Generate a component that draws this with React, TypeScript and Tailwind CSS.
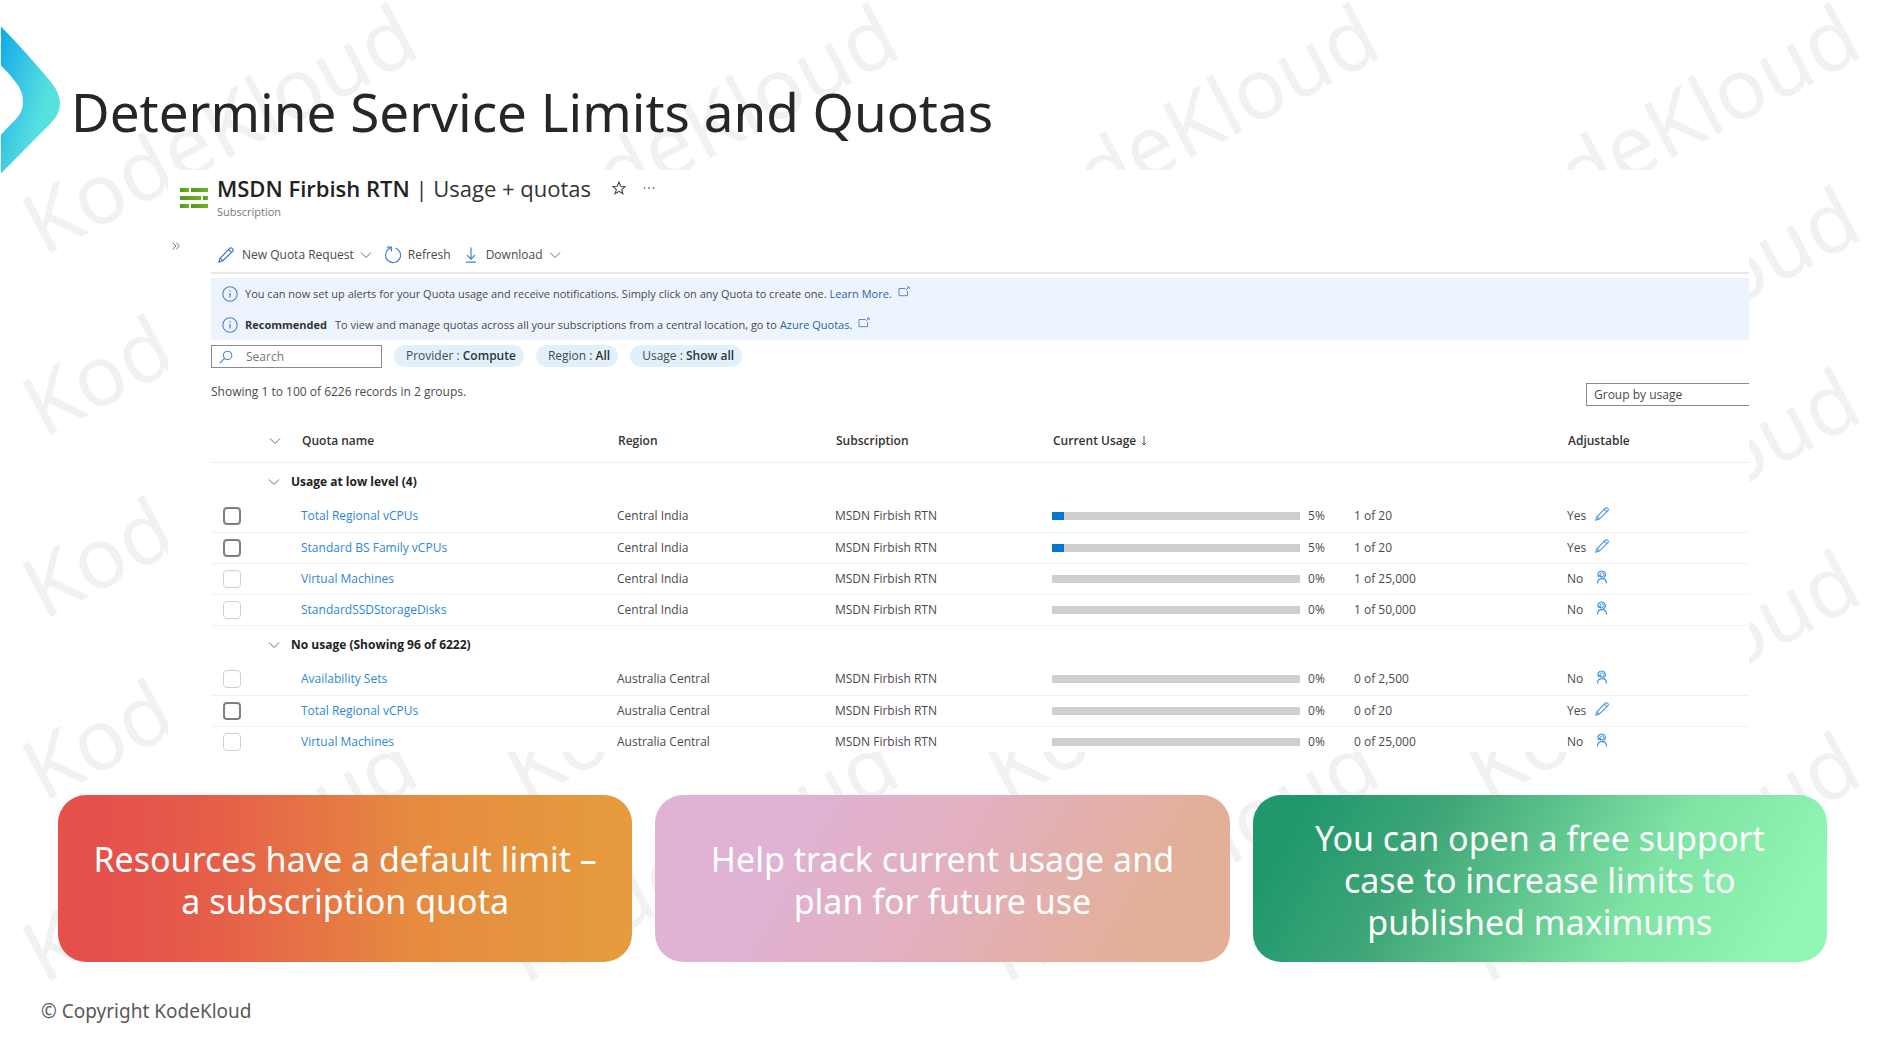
import type { ReactNode } from "react";

type Row = {
  name: string;
  region: string;
  percent: number;
  usage: string;
  adjustable: boolean;
  selectable: boolean;
};

type Group = { title: string; rows: Row[] };

const groups: Group[] = [
  {
    title: "Usage at low level (4)",
    rows: [
      { name: "Total Regional vCPUs", region: "Central India", percent: 5, usage: "1 of 20", adjustable: true, selectable: true },
      { name: "Standard BS Family vCPUs", region: "Central India", percent: 5, usage: "1 of 20", adjustable: true, selectable: true },
      { name: "Virtual Machines", region: "Central India", percent: 0, usage: "1 of 25,000", adjustable: false, selectable: false },
      { name: "StandardSSDStorageDisks", region: "Central India", percent: 0, usage: "1 of 50,000", adjustable: false, selectable: false },
    ],
  },
  {
    title: "No usage (Showing 96 of 6222)",
    rows: [
      { name: "Availability Sets", region: "Australia Central", percent: 0, usage: "0 of 2,500", adjustable: false, selectable: false },
      { name: "Total Regional vCPUs", region: "Australia Central", percent: 0, usage: "0 of 20", adjustable: true, selectable: true },
      { name: "Virtual Machines", region: "Australia Central", percent: 0, usage: "0 of 25,000", adjustable: false, selectable: false },
    ],
  },
];

function ChevronDown() {
  return (
    <svg aria-hidden="true" viewBox="0 0 12 8" className="h-2 w-3 fill-none stroke-[#6b6b6b]">
      <path d="M1 1.5 6 6.5 11 1.5" />
    </svg>
  );
}

function Pencil({ className }: { className: string }) {
  return (
    <svg aria-hidden="true" viewBox="0 0 16 16" className={className} fill="none" strokeWidth="1.2" strokeLinejoin="round">
      <path d="M.8 15.2 2.2 11.2 11.6 1.4a1.8 1.8 0 0 1 2.7 0l.3.3a1.8 1.8 0 0 1 0 2.7L4.8 13.8Z" />
      <path d="M2.2 11.2 4.8 13.8M10.6 2.5l2.9 2.9" />
    </svg>
  );
}

function RefreshIcon() {
  return (
    <svg aria-hidden="true" viewBox="0 0 18 18" className="h-[18px] w-[18px] fill-none stroke-[#3b83d6]" strokeWidth="1.2">
      <path d="M11.4 2A7.5 7.5 0 1 1 4.6 3.1L7 1.6" />
      <path d="M3 1.2h4.4v4.2" />
    </svg>
  );
}

function DownloadIcon() {
  return (
    <svg aria-hidden="true" viewBox="0 0 12 16" className="h-4 w-3 fill-none stroke-[#3b83d6]" strokeWidth="1.2">
      <path d="M6 .5v11.6M2 8.2l4 4 4-4M1 15.2h10" />
    </svg>
  );
}

function InfoIcon() {
  return (
    <svg aria-hidden="true" viewBox="0 0 16 16" className="h-4 w-4 shrink-0 fill-none stroke-[#4a7fe0]">
      <circle cx="8" cy="8" r="7.2" strokeWidth="1.1" />
      <path d="M8 7v4.6M8 4.3v1.3" strokeWidth="1.3" />
    </svg>
  );
}

function ExternalIcon() {
  return (
    <svg aria-hidden="true" viewBox="0 0 12 12" className="mb-1 h-3 w-3 shrink-0 fill-none stroke-[#5b8bd0]">
      <path d="M7.5 2.5H1v7.2h8.5V5M8 4l3-3M9 1h2.2v2.2" />
    </svg>
  );
}

function SupportIcon() {
  return (
    <svg aria-hidden="true" viewBox="0 0 14 14" className="mb-1 h-3.5 w-3.5 fill-none stroke-[#3f93e0]" strokeWidth="1.2">
      <path d="M3.9 7.2A3.7 3.7 0 1 1 7 8.4" />
      <circle cx="7" cy="4.7" r="1.9" strokeWidth=".9" />
      <path d="M4.3 4.9c.3 1.3 1 2 2.4 2.2" strokeWidth="1.5" />
      <path d="M2.4 13.4C2.6 10.4 4 8.7 7 8.7s4.4 1.7 4.6 4.7" />
    </svg>
  );
}

function SubscriptionIcon() {
  return (
    <svg aria-hidden="true" viewBox="0 0 28 21" className="h-[21px] w-7 shrink-0">
      <defs>
        <linearGradient id="bar" x1="0" y1="0" x2="1" y2="0">
          <stop offset="0" stopColor="#4c9a1e" />
          <stop offset="1" stopColor="#74b324" />
        </linearGradient>
      </defs>
      <g fill="url(#bar)">
        <rect x="0" y="0" width="9" height="4" />
        <rect x="11" y="0" width="17" height="4" />
        <rect x="0" y="8" width="21" height="4" />
        <rect x="23" y="8" width="5" height="4" />
        <rect x="0" y="16" width="9" height="4" />
        <rect x="11" y="16" width="17" height="4" />
      </g>
    </svg>
  );
}

function Watermarks() {
  return (
    <div aria-hidden="true" className="pointer-events-none absolute inset-0 overflow-hidden pt-[179px] pl-[43px] select-none">
      <div className="grid grid-cols-[repeat(4,481px)] auto-rows-[182px]">
        {Array.from({ length: 20 }, (_, i) => (
          <span key={i} className="h-[84px] w-[440px] origin-[8px_75px] -rotate-[28deg] text-[84px] leading-none text-[#f1f1f1]">
            KodeKloud
          </span>
        ))}
      </div>
    </div>
  );
}

function Pill({ label, value }: { label: string; value: string }) {
  return (
    <button type="button" className="h-[22px] rounded-full bg-[#e2f0fb] pr-2 pl-3 text-[12px] leading-4 text-[#4a4a4a]">
      {label} : <span className="font-semibold text-[#333]">{value}</span>
    </button>
  );
}

function QuotaRow({ row, last }: { row: Row; last: boolean }) {
  return (
    <tr className={last ? "h-[26px] *:pt-[5px]" : "h-[31px] border-b border-[#f2f2f2]"}>
      <td className="pl-3">
        <input
          type="checkbox"
          aria-label={`Select ${row.name}, ${row.region}`}
          disabled={!row.selectable}
          className="block h-[18px] w-[18px] appearance-none rounded-sm border-2 border-[#808080] bg-white disabled:border disabled:border-[#cfcfcf]"
        />
      </td>
      <td />
      <td className="pl-[10px]">
        <a href="#quota" className="text-[#2b88d8]">{row.name}</a>
      </td>
      <td>{row.region}</td>
      <td>MSDN Firbish RTN</td>
      <td>
        <div className="flex items-center">
          <div className="mr-2 h-2 w-[248px] bg-[#cfcfcf]">
            <div className="h-full bg-[#0078d4]" style={{ width: `${row.percent}%` }} />
          </div>
          <span className="w-[46px]">{row.percent}%</span>
          <span>{row.usage}</span>
        </div>
      </td>
      <td>
        <div className="flex items-center">
          <span className="w-7">{row.adjustable ? "Yes" : "No"}</span>
          {row.adjustable ? <Pencil className="mb-1 h-3.5 w-3.5 stroke-[#3f93e0]" /> : <SupportIcon />}
        </div>
      </td>
    </tr>
  );
}

function QuotaPanel() {
  return (
    <section className="mt-7 mr-[135px] ml-[168px] bg-white text-[12px] leading-4 text-[#4a4a4a]">
      <header className="flex pt-1 pl-3">
        <div className="pt-[14px] pr-[9px]">
          <SubscriptionIcon />
        </div>
        <div>
          <div className="flex items-center">
            <h2 className="text-[22px] leading-7 text-[#333]">
              <span className="font-semibold text-[#222]">MSDN Firbish RTN</span> | Usage + quotas
            </h2>
            <button type="button" aria-label="Add to favorites" className="ml-[21px]">
              <svg viewBox="0 0 14 14" className="h-3.5 w-3.5 fill-none stroke-[#444]" strokeWidth="1.1">
                <path d="m7 1 1.7 4.2 4.5.3-3.5 2.9 1.2 4.4L7 10.4l-3.9 2.4 1.2-4.4L.8 5.5l4.5-.3Z" />
              </svg>
            </button>
            <button type="button" aria-label="More actions" className="ml-[17px]">
              <svg viewBox="0 0 12 2" className="h-0.5 w-3 fill-[#777]">
                <circle cx="1.5" cy="1" r=".9" />
                <circle cx="6" cy="1" r=".9" />
                <circle cx="10.5" cy="1" r=".9" />
              </svg>
            </button>
          </div>
          <p className="mt-0.5 text-[11px] text-[#777]">Subscription</p>
        </div>
      </header>

      <div className="flex">
        <div className="w-[43px] shrink-0 pt-[22px] pl-1">
          <button type="button" aria-label="Expand menu" className="block">
            <svg viewBox="0 0 8 8" className="h-2 w-2 fill-none stroke-[#777]">
              <path d="M.8.6 3.8 4 .8 7.4M4.3.6 7.3 4 4.3 7.4" />
            </svg>
          </button>
        </div>

        <div className="min-w-0 flex-1">
          <div className="flex h-[54px] items-center border-b-2 border-[#ebe9e8] pt-[17px] pl-[7px]">
            <button type="button" className="flex items-center">
              <Pencil className="mr-2 h-4 w-4 stroke-[#3b78d0]" />
              <span className="mr-[6px]">New Quota Request</span>
              <ChevronDown />
            </button>
            <button type="button" className="ml-3 flex items-center">
              <RefreshIcon />
              <span className="ml-[6px]">Refresh</span>
            </button>
            <button type="button" className="ml-[14px] flex items-center">
              <DownloadIcon />
              <span className="mr-[6px] ml-[9px]">Download</span>
              <ChevronDown />
            </button>
          </div>

          <div className="mt-1 bg-[#eef4fe] text-[11px]">
            <p className="flex h-[31px] items-center pl-[11px]">
              <InfoIcon />
              <span className="mr-[3px] ml-[7px]">
                You can now set up alerts for your Quota usage and receive notifications. Simply click on any Quota to create one.
              </span>
              <a href="#learn" className="mr-[6px] text-[#2464ad]">Learn More.</a>
              <ExternalIcon />
            </p>
            <p className="flex h-[31px] items-center pl-[11px]">
              <InfoIcon />
              <strong className="mr-2 ml-[7px] text-[#333]">Recommended</strong>
              <span className="mr-[3px]">To view and manage quotas across all your subscriptions from a central location, go to</span>
              <a href="#azure-quotas" className="mr-[6px] text-[#2464ad]">Azure Quotas.</a>
              <ExternalIcon />
            </p>
          </div>

          <div className="mt-[5px] flex">
            <label className="mr-3 flex h-[23px] w-[171px] items-center border border-[#8a8a8a] pl-[7px]">
              <svg aria-hidden="true" viewBox="0 0 14 14" className="h-3.5 w-3.5 shrink-0 fill-none stroke-[#4a86d8]" strokeWidth="1.1">
                <circle cx="8.6" cy="5.4" r="4.2" />
                <path d="M5.5 8.5.8 13.2" />
              </svg>
              <input type="text" aria-label="Search" placeholder="Search" className="ml-[13px] w-full min-w-0 bg-transparent outline-none placeholder:text-[#777]" />
            </label>
            <div className="flex gap-3">
              <Pill label="Provider" value="Compute" />
              <Pill label="Region" value="All" />
              <Pill label="Usage" value="Show all" />
            </div>
          </div>

          <div className="mt-[15px] flex justify-between">
            <p className="pt-px">Showing 1 to 100 of 6226 records in 2 groups.</p>
            <select aria-label="Group by" className="h-[23px] w-[163px] appearance-none border border-r-0 border-[#8a8a8a] bg-white pl-[7px]">
              <option>Group by usage</option>
            </select>
          </div>

          <table className="mt-[14px] w-full table-fixed border-collapse text-left">
            <colgroup>
              <col className="w-12" />
              <col className="w-8" />
              <col className="w-[326px]" />
              <col className="w-[218px]" />
              <col className="w-[217px]" />
              <col />
              <col className="w-[182px]" />
            </colgroup>
            <thead>
              <tr className="h-[42px] border-b border-[#ececec] text-[#333] *:font-semibold">
                <td />
                <td className="pl-[10px]"><ChevronDown /></td>
                <th scope="col" className="pl-[11px]">Quota name</th>
                <th scope="col" className="pl-px">Region</th>
                <th scope="col" className="pl-px">Subscription</th>
                <th scope="col" className="pl-px">
                  <span className="flex items-center gap-[5px]">
                    Current Usage
                    <svg aria-hidden="true" viewBox="0 0 6 10" className="h-2.5 w-1.5 fill-none stroke-[#555]">
                      <path d="M3 0v9M.8 6.8 3 9l2.2-2.2" />
                    </svg>
                  </span>
                </th>
                <th scope="col" className="pl-px">Adjustable</th>
              </tr>
            </thead>
            {groups.map((group, g) => (
              <tbody key={group.title}>
                <tr className="h-[39px]">
                  <td />
                  <td className="pl-[9px]"><ChevronDown /></td>
                  <th scope="rowgroup" colSpan={5} className="font-bold text-[#222]">{group.title}</th>
                </tr>
                {group.rows.map((row, r) => (
                  <QuotaRow key={row.name} row={row} last={g === groups.length - 1 && r === group.rows.length - 1} />
                ))}
              </tbody>
            ))}
          </table>
        </div>
      </div>
    </section>
  );
}

function Card({ className, children }: { className: string; children: ReactNode }) {
  return (
    <p className={`flex min-h-[167px] items-center justify-center rounded-[28px] px-8 pt-[22px] pb-[19px] text-center text-[34px] leading-[42px] text-white ${className}`}>
      {children}
    </p>
  );
}

export default function App() {
  return (
    <main className="relative min-h-screen overflow-hidden bg-white font-['Noto_Sans','Open_Sans',sans-serif]">
      <Watermarks />
      <svg aria-hidden="true" viewBox="0 0 62 150" className="absolute top-[25px] left-0 h-[150px] w-[62px]">
        <defs>
          <linearGradient id="arrow" x1="0" y1="0.1" x2="0.9" y2="0.75">
            <stop offset="0" stopColor="#12aeea" />
            <stop offset=".35" stopColor="#36c3e4" />
            <stop offset=".75" stopColor="#55dfe0" />
            <stop offset="1" stopColor="#58e3dc" />
          </linearGradient>
        </defs>
        <path fill="url(#arrow)" d="M1 1.5Q26 27 51 57 60 68 60 79 60 89 51 98L1 148.5V109.5L16 94Q23 87 23 77 23 67 17 59 9 48 1 40.5Z" />
      </svg>
      <div className="relative">
        <h1 className="pt-[82px] pl-[71px] text-[53px] leading-[60px] text-[#262626]">Determine Service Limits and Quotas</h1>
        <div className="font-['Open_Sans','Noto_Sans',sans-serif]">
          <QuotaPanel />
        </div>
        <div className="mt-[43px] mr-[57px] ml-[58px] grid grid-cols-3 gap-[23px]">
          <Card className="bg-[linear-gradient(90deg,#e6504b_8%,#e55f49_28%,#e68b40_62%,#e69c3d)]">Resources have a default limit –<br />a subscription quota</Card>
          <Card className="bg-[linear-gradient(120deg,#e0b2d6_20%,#e2b0bf_50%,#e3af97_85%)]">Help track current usage and<br />plan for future use</Card>
          <Card className="bg-[linear-gradient(120deg,#1f986b_8%,#3fa678_30%,#7ee3a3_66%,#92f7b4_92%)]">
            You can open a free support<br />case to increase limits to<br />published maximums
          </Card>
        </div>
        <footer className="mt-[37px] pl-[41px] text-[19px] leading-6 text-[#595959]">© Copyright KodeKloud</footer>
      </div>
    </main>
  );
}
